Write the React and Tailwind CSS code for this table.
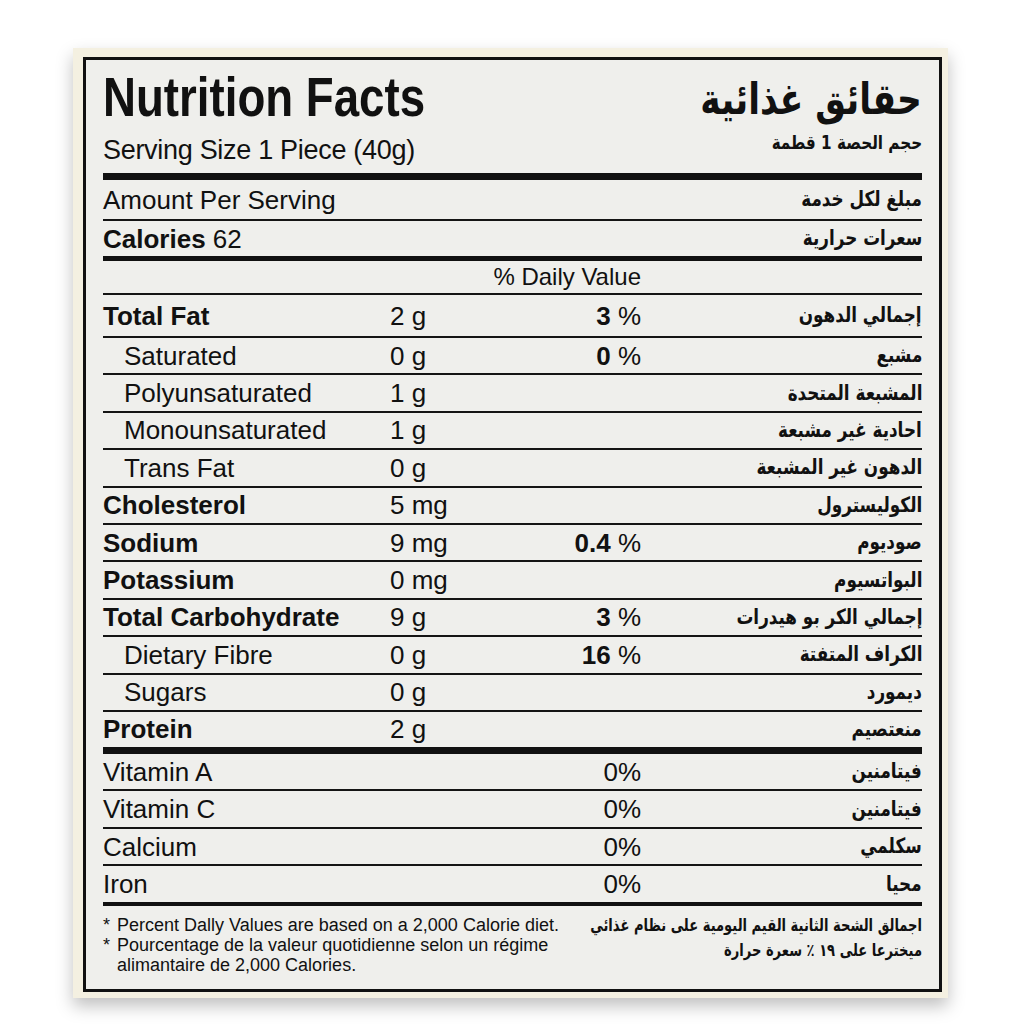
import React from 'react'

const rows = [
  { name: 'Saturated', indent: true, amt: '0 g', pct: '0', ar: 'مشبع' },
  { name: 'Polyunsaturated', indent: true, amt: '1 g', ar: 'المشبعة المتحدة' },
  { name: 'Monounsaturated', indent: true, amt: '1 g', ar: 'احادية غير مشبعة' },
  { name: 'Trans Fat', indent: true, amt: '0 g', ar: 'الدهون غير المشبعة' },
  { name: 'Cholesterol', bold: true, amt: '5 mg', ar: 'الكوليسترول' },
  { name: 'Sodium', bold: true, amt: '9 mg', pct: '0.4', ar: 'صوديوم' },
  { name: 'Potassium', bold: true, amt: '0 mg', ar: 'البواتسيوم' },
  { name: 'Total Carbohydrate', bold: true, amt: '9 g', pct: '3', ar: 'إجمالي الكر بو هيدرات' },
  { name: 'Dietary Fibre', indent: true, amt: '0 g', pct: '16', ar: 'الكراف المتفتة' },
  { name: 'Sugars', indent: true, amt: '0 g', ar: 'ديمورد' },
]

const vitamins = [
  { name: 'Vitamin A', ar: 'فيتامنين' },
  { name: 'Vitamin C', ar: 'فيتامنين' },
  { name: 'Calcium', ar: 'سكلمي' },
  { name: 'Iron', ar: 'محيا' },
]

const sans = "font-['Liberation_Sans',Arial,sans-serif]"
const arabic = "font-['DejaVu_Sans',sans-serif] font-bold"

// DejaVu's Arabic runs wide, so squeeze it from the right edge
function Arabic({ children, className = '' }) {
  return (
    <div dir="rtl" className={`${arabic} text-right whitespace-nowrap ${className}`}>
      <span className="inline-block origin-right scale-x-[0.8]">{children}</span>
    </div>
  )
}

function NutrientRow({ row }) {
  // heights include the 2px rule (border-box)
  return (
    <div className="flex items-center h-[37.4px] border-b-2 border-[#141414]">
      <div className={`w-[287px] ${row.indent ? 'pl-[21px]' : ''} ${row.bold ? 'font-bold' : ''}`}>{row.name}</div>
      <div className="w-[140px]">{row.amt}</div>
      <div className="w-[111px] text-right">
        {row.pct && (
          <>
            <span className="font-bold">{row.pct}</span> %
          </>
        )}
      </div>
      <Arabic className="flex-1 text-[21px]">{row.ar}</Arabic>
    </div>
  )
}

export default function App() {
  return (
    <div className={`min-h-screen bg-white pt-[48px] pl-[73px] text-[#111] ${sans}`}>
      <div className="w-[875px] h-[950px] bg-[#f4f0e1] pt-[9px] pl-[10px] pr-[6px] pb-[6px] shadow-[0_8px_16px_rgba(0,0,0,0.25)]">
        <div className="h-full border-[3px] border-[#111] bg-[#efefec] px-[17px] flex flex-col text-[26px] leading-none">
          {/* Header */}
          <div className="h-[113px] flex justify-between">
            <div>
              <div className="pt-[9.5px] text-[55px] leading-[55px] font-bold">
                <span className="inline-block origin-left scale-x-[0.83] whitespace-nowrap">Nutrition Facts</span>
              </div>
              <div className="mt-[10px] text-[27px] leading-[30px] tracking-[-0.3px]">Serving Size 1 Piece (40g)</div>
            </div>
            <div className="flex flex-col items-end">
              <Arabic className="pt-[12px] text-[43px] leading-[54px]">حقائق غذائية</Arabic>
              <Arabic className="mt-[4px] text-[19px] leading-[24px]">حجم الحصة 1 قطمة</Arabic>
            </div>
          </div>
          <div className="h-[7px] bg-[#111]" />

          <div className="flex items-center justify-between h-[41px] border-b-2 border-[#141414]">
            <div>Amount Per Serving</div>
            <Arabic className="text-[21px]">مبلغ لكل خدمة</Arabic>
          </div>
          <div className="flex items-center justify-between h-[35px]">
            <div>
              <span className="font-bold">Calories</span> 62
            </div>
            <Arabic className="text-[21px]">سعرات حرارية</Arabic>
          </div>
          <div className="h-[5px] bg-[#111]" />

          <div className="flex items-center h-[34px] border-b-2 border-[#141414]">
            <div className="w-[538px] text-right text-[24px]">% Daily Value</div>
          </div>

          <div className="flex items-center h-[43px] border-b-2 border-[#141414]">
            <div className="w-[287px] font-bold">Total Fat</div>
            <div className="w-[140px]">2 g</div>
            <div className="w-[111px] text-right">
              <span className="font-bold">3</span> %
            </div>
            <Arabic className="flex-1 text-[21px]">إجمالي الدهون</Arabic>
          </div>

          {rows.map((row) => (
            <NutrientRow key={row.name} row={row} />
          ))}

          <div className="flex items-center h-[35px]">
            <div className="w-[287px] font-bold">Protein</div>
            <div className="w-[140px]">2 g</div>
            <div className="w-[111px]" />
            <Arabic className="flex-1 text-[21px]">منعتصيم</Arabic>
          </div>
          <div className="h-[7px] bg-[#111]" />

          {vitamins.map((v, i) => (
            <div
              key={v.name}
              className={`flex items-center ${i < 3 ? 'h-[37.5px] border-b-2 border-[#141414]' : 'h-[35.5px]'}`}
            >
              <div className="w-[538px] flex justify-between">
                <span>{v.name}</span>
                <span>0%</span>
              </div>
              <Arabic className="flex-1 text-[21px]">{v.ar}</Arabic>
            </div>
          ))}
          <div className="h-[4px] bg-[#111]" />

          {/* Footnotes */}
          <div className="flex justify-between pt-[9px] text-[18px] leading-[20px]">
            <div className="whitespace-nowrap">
              <div className="flex">
                <span className="w-[14px] shrink-0">*</span>
                <span>Percent Dally Values are based on a 2,000 Calorie diet.</span>
              </div>
              <div className="flex">
                <span className="w-[14px] shrink-0">*</span>
                <span>
                  Pourcentage de la valeur quotidienne selon un régime
                  <br />
                  alimantaire de 2,000 Calories.
                </span>
              </div>
            </div>
            <div dir="rtl" className={`${arabic} w-[330px] shrink-0 text-right whitespace-nowrap text-[17px] leading-[25px] -mt-[2px]`}>
              <div className="origin-right scale-x-[0.77]">
                <div>اجمالق الشحة الثانية القيم اليومية على نظام غذائي</div>
                <div>ميخترعا على ١٩ ٪ سعرة حرارة</div>
              </div>
            </div>
          </div>
        </div>
      </div>
    </div>
  )
}
